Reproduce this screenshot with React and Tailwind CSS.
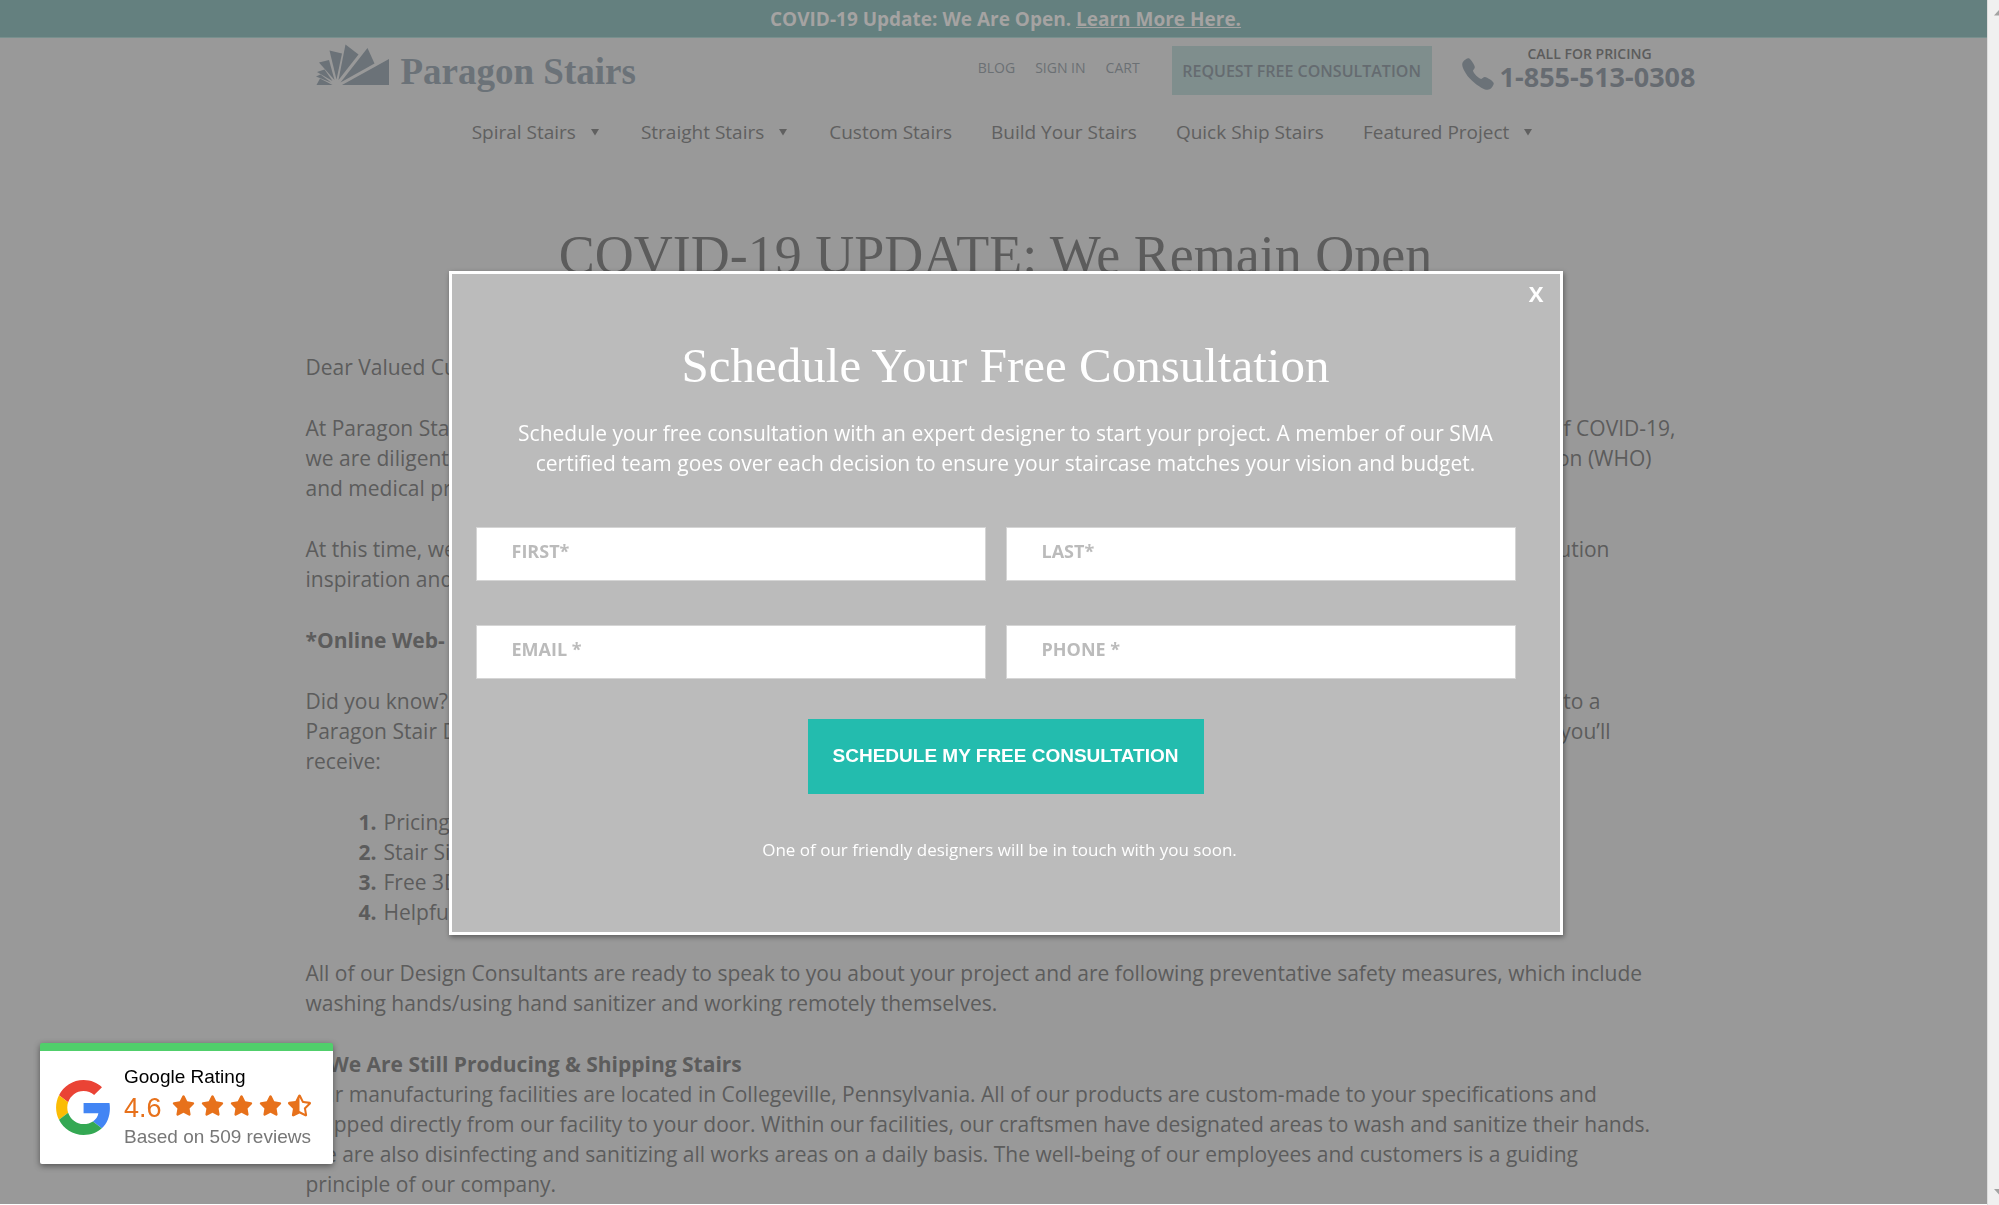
import React from "react";
import { IoCall } from "react-icons/io5";
import { FaStar, FaStarHalfAlt } from "react-icons/fa";

const navItems = [
  { label: "Spiral Stairs", menu: true },
  { label: "Straight Stairs", menu: true },
  { label: "Custom Stairs", menu: false },
  { label: "Build Your Stairs", menu: false },
  { label: "Quick Ship Stairs", menu: false },
  { label: "Featured Project", menu: true },
];

const benefits = ["Pricing", "Stair Si", "Free 3D", "Helpful"];

function Logo() {
  return (
    <a href="#home" className="flex items-end gap-3 text-[#6b7278]">
      <svg viewBox="0 0 73 42" className="mb-4 h-[42px] w-[73px]" fill="currentColor" aria-hidden="true">
        <path d="M26 41 73 15v26z" />
        <path d="M24.500 38.500 51.500 4 58.500 19.500z" />
        <path d="M22.500 36 29.500 0.500 42.500 10.500z" />
        <path d="M20.500 35.500 13.500 6.500 26 9.500z" />
        <path d="M18.500 36 3 18.500 13 16z" />
        <path d="M16.500 37 1 28 8.500 25.500z" />
        <path d="M15 38.500 0 32.500 4.500 30.500z" />
        <path d="M0.500 41 4 34.500 16.500 41z" />
      </svg>
      <span className="font-['Liberation_Serif',serif] text-[37px] font-bold leading-[60px]">Paragon Stairs</span>
    </a>
  );
}

function Header() {
  return (
    <header className="pl-3">
      <div className="mx-auto flex h-[66px] max-w-[1380px] items-start justify-between">
        <div className="pt-1">
          <Logo />
        </div>
        <div className="flex items-start pt-2">
          <nav aria-label="Account" className="flex gap-5 pr-8 pt-3 text-[14px] leading-5 text-[#6b7074]">
            <a href="#blog">BLOG</a>
            <a href="#signin">SIGN IN</a>
            <a href="#cart">CART</a>
          </nav>
          <button
            type="button"
            className="h-[49px] w-[260px] whitespace-nowrap bg-[#7f8e8d] text-[16px] font-semibold text-[#656b70]"
          >
            REQUEST FREE CONSULTATION
          </button>
          <div className="flex items-end pl-7">
            <IoCall className="mr-1 size-9 text-[#6b7278]" aria-hidden="true" />
            <div className="flex flex-col items-center">
              <span className="pr-4 text-[14px] font-semibold leading-4 text-[#5c5c5c]">CALL FOR PRICING</span>
              <a href="tel:18555130308" className="text-[27px] font-bold leading-[30px] text-[#666b71]">
                1-855-513-0308
              </a>
            </div>
          </div>
        </div>
      </div>
      <nav aria-label="Main" className="flex h-14 items-center justify-center gap-[39px] pr-1 text-[19px] text-[#606060]">
        {navItems.map((item) => (
          <a key={item.label} href="#nav" className="flex items-center whitespace-nowrap">
            {item.label}
            {item.menu && (
              <svg viewBox="0 0 12 8" className="ml-3.5 h-2 w-3" fill="currentColor" aria-hidden="true">
                <path d="M1 1h8L5 7.500z" />
              </svg>
            )}
          </a>
        ))}
      </nav>
    </header>
  );
}

function SplitLine({ start, end, inset }) {
  return (
    <span className="flex justify-between">
      <span>{start}</span>
      <span className={inset}>{end}</span>
    </span>
  );
}

function Article() {
  return (
    <main className="mx-auto max-w-[1388px] text-[21px] leading-[30px] text-[#5c5c5c]">
      <h1 className="mt-[65px] whitespace-nowrap pr-2 text-center font-['Liberation_Serif',serif] text-[54px] leading-[60px]">
        COVID-19 UPDATE: We Remain Open
      </h1>
      <div className="mt-[67px] flex flex-col gap-[31px]">
        <p>Dear Valued Customer,</p>
        <p>
          <SplitLine start="At Paragon Stairs" end="of COVID-19," inset="pr-[18px]" />
          <SplitLine start="we are diligently" end="Organization (WHO)" inset="pr-[42px]" />
          and medical pro
        </p>
        <p>
          <SplitLine start="At this time, we" end="solution" inset="pr-[84px]" />
          inspiration and
        </p>
        <p className="font-bold">*Online Web-</p>
        <p>
          <SplitLine start="Did you know?" end="to a" inset="pr-[93px]" />
          <SplitLine start="Paragon Stair D" end="you’ll" inset="pr-[83px]" />
          receive:
        </p>
        <ol className="pl-[53px]">
          {benefits.map((text, i) => (
            <li key={text} className="flex">
              <b className="w-[25px]">{i + 1}.</b>
              {text}
            </li>
          ))}
        </ol>
        <p>
          All of our Design Consultants are ready to speak to you about your project and are following preventative
          safety measures, which include
          <br />
          washing hands/using hand sanitizer and working remotely themselves.
        </p>
        <p className="whitespace-nowrap">
          <b>**We Are Still Producing &amp; Shipping Stairs</b>
          <br />
          Our manufacturing facilities are located in Collegeville, Pennsylvania. All of our products are custom-made to
          your specifications and
          <br />
          shipped directly from our facility to your door. Within our facilities, our craftsmen have designated areas to
          wash and sanitize their hands.
          <br />
          We are also disinfecting and sanitizing all works areas on a daily basis. The well-being of our employees and
          customers is a guiding
          <br />
          principle of our company.
        </p>
      </div>
    </main>
  );
}

function Field({ label, type, name }) {
  return (
    <input
      type={type}
      name={name}
      aria-label={label}
      placeholder={label}
      className="h-[54px] w-full rounded-none border border-[#d5d5d5] bg-white pb-1.5 pl-[35px] text-[18px] font-bold text-[#555] placeholder:text-[#bbb]"
    />
  );
}

function ConsultationModal() {
  return (
    <div className="fixed inset-0 flex items-center justify-center pl-3">
      <div
        role="dialog"
        aria-modal="true"
        aria-labelledby="consultation-title"
        className="relative w-[1114px] max-w-full border-[3px] border-white bg-[#bbb] pb-[67px] pt-[62px] text-center text-white shadow-[1px_2px_5px_rgba(0,0,0,0.4)]"
      >
        <button type="button" aria-label="Close" className="absolute right-4 top-1 text-[22px] font-bold leading-[30px]">
          X
        </button>
        <h2 id="consultation-title" className="font-['Liberation_Serif',serif] text-[49px] leading-[60px]">
          Schedule Your Free Consultation
        </h2>
        <p className="mt-[22px] text-[21px] leading-[30px]">
          Schedule your free consultation with an expert designer to start your project. A member of our SMA
          <br />
          certified team goes over each decision to ensure your staircase matches your vision and budget.
        </p>
        <form className="mt-[49px]" onSubmit={(e) => e.preventDefault()}>
          <div className="grid grid-cols-2 gap-x-5 gap-y-11 pl-6 pr-11">
            <Field label="FIRST*" type="text" name="first" />
            <Field label="LAST*" type="text" name="last" />
            <Field label="EMAIL *" type="email" name="email" />
            <Field label="PHONE *" type="tel" name="phone" />
          </div>
          <button
            type="submit"
            className="mt-10 h-[75px] w-[396px] bg-[#23bcae] font-['Liberation_Sans',sans-serif] text-[19px] font-bold"
          >
            SCHEDULE MY FREE CONSULTATION
          </button>
        </form>
        <p className="mt-[41px] pr-3 text-[17px] leading-[30px]">
          One of our friendly designers will be in touch with you soon.
        </p>
      </div>
    </div>
  );
}

function GoogleLogo() {
  return (
    <svg viewBox="0 0 47 48" className="h-[55px] w-[54px]" aria-hidden="true">
      <path
        fill="#ea4335"
        d="M24 9.500c3.540 0 6.710 1.220 9.210 3.600l6.850-6.850C35.900 2.380 30.470 0 24 0 14.620 0 6.510 5.380 2.560 13.220l7.980 6.190C12.430 13.720 17.740 9.500 24 9.500z"
      />
      <path
        fill="#4285f4"
        d="M46.980 24.550c0-1.570-.15-3.090-.38-4.550H24v9.020h12.940c-.58 2.960-2.260 5.480-4.780 7.180l7.730 6c4.510-4.180 7.090-10.360 7.090-17.650z"
      />
      <path
        fill="#fbbc05"
        d="M10.530 28.590c-.48-1.450-.76-2.990-.76-4.590s.27-3.140.76-4.590l-7.980-6.190C.92 16.460 0 20.120 0 24c0 3.880.92 7.540 2.560 10.780l7.970-6.190z"
      />
      <path
        fill="#34a853"
        d="M24 48c6.480 0 11.930-2.130 15.890-5.810l-7.730-6c-2.150 1.450-4.920 2.300-8.160 2.300-6.260 0-11.570-4.220-13.470-9.910l-7.980 6.190C6.510 42.620 14.620 48 24 48z"
      />
    </svg>
  );
}

function RatingBadge() {
  return (
    <aside className="fixed bottom-[41px] left-10 flex h-[121px] w-[293px] items-center gap-3.5 rounded-[2px] border-t-8 border-[#50cf6b] bg-white pl-4 font-['Liberation_Sans',sans-serif] shadow-[0_2px_6px_rgba(0,0,0,0.45)]">
      <GoogleLogo />
      <div className="pb-1 text-[19px]">
        <div className="leading-[26px] text-black">Google Rating</div>
        <div className="flex items-center gap-2.5 text-[#e7711b]">
          <span className="text-[27px] leading-9">4.6</span>
          <span className="flex gap-1.5 pb-1" role="img" aria-label="4.6 out of 5 stars">
            <FaStar className="size-[23px]" />
            <FaStar className="size-[23px]" />
            <FaStar className="size-[23px]" />
            <FaStar className="size-[23px]" />
            <FaStarHalfAlt className="size-[23px]" />
          </span>
        </div>
        <div className="leading-[22px] text-[#777]">Based on 509 reviews</div>
      </div>
    </aside>
  );
}

function ScrollBar() {
  return (
    <div
      aria-hidden="true"
      className="fixed inset-y-0 right-0 flex w-3 flex-col justify-between border-l border-[#ddd] bg-[#f0f0f0] py-2.5"
    >
      <svg viewBox="0 0 11 6" className="h-1.5 w-[11px]" fill="#a3a3a3">
        <path d="M6 5.500 11 0v5.500z" />
      </svg>
      <svg viewBox="0 0 11 6" className="h-1.5 w-[11px]" fill="#a3a3a3">
        <path d="M6 0h5v5.500z" />
      </svg>
    </div>
  );
}

export default function App() {
  return (
    <div className="min-h-screen border-b border-white bg-[#999] pb-1 font-['Open_Sans',sans-serif]">
      <div className="h-[38px] border-b border-[#78908e] bg-[#64807f] pl-3 text-center text-[19px] font-bold leading-[38px] text-[#a5a3a2]">
        COVID-19 Update: We Are Open.{" "}
        <a href="#covid" className="underline">
          Learn More Here.
        </a>
      </div>
      <Header />
      <Article />
      <ConsultationModal />
      <RatingBadge />
      <ScrollBar />
    </div>
  );
}
